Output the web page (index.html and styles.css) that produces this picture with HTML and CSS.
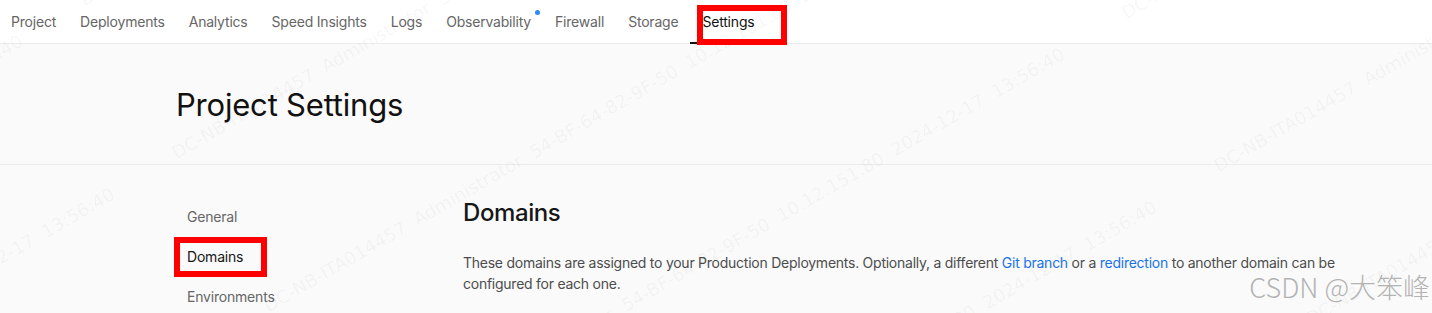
FILE: index.html
```html
<!DOCTYPE html>
<html lang="en">
<head>
    <meta charset="UTF-8">
    <meta name="viewport" content="width=device-width, initial-scale=1.0">
    <title>Project Settings - Domains</title>
    <link rel="stylesheet" href="styles.css">
</head>
<body>
    <nav class="tabs">
        <a class="tab" href="#">Project</a>
        <a class="tab" href="#">Deployments</a>
        <a class="tab" href="#">Analytics</a>
        <a class="tab" href="#">Speed Insights</a>
        <a class="tab" href="#">Logs</a>
        <a class="tab" href="#">Observability<span class="dot"></span></a>
        <a class="tab" href="#">Firewall</a>
        <a class="tab" href="#">Storage</a>
        <a class="tab active" href="#">Settings<span class="mark mark-tab"></span></a>
    </nav>

    <header class="page-head">
        <div class="wrap">
            <h1>Project Settings</h1>
        </div>
    </header>

    <section class="settings">
        <div class="wrap layout">
            <aside class="side">
                <a href="#">General</a>
                <a class="active" href="#">Domains<span class="mark mark-side"></span></a>
                <a href="#">Environments</a>
            </aside>
            <main class="main">
                <h2>Domains</h2>
                <p>These domains are assigned to your Production Deployments. Optionally, a different <a href="#">Git branch</a> or a <a href="#">redirection</a> to another domain can be configured for each one.</p>
            </main>
        </div>
    </section>

    <!-- 截图水印 -->
    <div class="watermark">
        <span class="wm wm-1">DC-NB-ITA014457  Administrator  54-BF-64-82-9F-50  10.12.151.80  2024-12-17  13:56:40</span>
        <span class="wm wm-2">DC-NB-ITA014457  Administrator  54-BF-64-82-9F-50  10.12.151.80  2024-12-17  13:56:40</span>
        <span class="wm wm-3">DC-NB-ITA014457  Administrator  54-BF-64-82-9F-50  10.12.151.80  2024-12-17  13:56:40</span>
        <span class="wm wm-4">DC-NB-ITA014457  Administrator  54-BF-64-82-9F-50  10.12.151.80  2024-12-17  13:56:40</span>
        <span class="wm wm-5">DC-NB-ITA014457  Administrator  54-BF-64-82-9F-50  10.12.151.80  2024-12-17  13:56:40</span>
        <span class="wm wm-6">DC-NB-ITA014457  Administrator  54-BF-64-82-9F-50  10.12.151.80  2024-12-17  13:56:40</span>
        <span class="wm wm-7">DC-NB-ITA014457  Administrator  54-BF-64-82-9F-50  10.12.151.80  2024-12-17  13:56:40</span>
        <span class="wm wm-8">DC-NB-ITA014457  Administrator  54-BF-64-82-9F-50  10.12.151.80  2024-12-17  13:56:40</span>
        <span class="wm wm-9">DC-NB-ITA014457  Administrator  54-BF-64-82-9F-50  10.12.151.80  2024-12-17  13:56:40</span>
        <span class="wm wm-10">DC-NB-ITA014457  Administrator  54-BF-64-82-9F-50  10.12.151.80  2024-12-17  13:56:40</span>
    </div>
    <div class="csdn">CSDN @大笨峰</div>
</body>
</html>
```

FILE: styles.css
```css
* {
    margin: 0;
    padding: 0;
    box-sizing: border-box;
}

body {
    font-family: Inter, 'Noto Sans', Arial, sans-serif;
    background: #fafafa;
    color: #171717;
    min-height: 100vh;
    overflow: hidden;
}

a {
    text-decoration: none;
    color: inherit;
}

/* 顶部标签栏 */
.tabs {
    display: flex;
    height: 44px;
    background: #fff;
    border-bottom: 1px solid #ebebeb;
}

.tab {
    position: relative;
    display: flex;
    align-items: center;
    padding: 0 12px;
    font-size: 14px;
    letter-spacing: -0.2px;
    color: #666;
}

.tab:first-child {
    padding-left: 11px;
}

.tab.active {
    color: #111;
}

.tab.active::after {
    content: '';
    position: absolute;
    left: 0;
    right: 0;
    bottom: -1px;
    height: 2px;
    background: #111;
}

.dot {
    position: absolute;
    top: 10px;
    right: 3px;
    width: 5px;
    height: 5px;
    border-radius: 50%;
    background: #2a8af6;
}

/* 红框标注 */
.mark {
    position: absolute;
    border: 6px solid #ff0000;
    z-index: 3;
}

.mark-tab {
    left: 7px;
    top: 5px;
    width: 90px;
    height: 40px;
}

.mark-side {
    left: -2px;
    top: 0;
    width: 93px;
    height: 40px;
}

.wrap {
    margin-left: 176px;
    margin-right: 60px;
}

.page-head {
    height: 121px;
    border-bottom: 1px solid #ebebeb;
}

.page-head .wrap {
    height: 100%;
    display: flex;
    align-items: center;
}

.page-head h1 {
    font-size: 31px;
    font-weight: 400;
    letter-spacing: -0.2px;
    color: #111;
}

.layout {
    display: grid;
    grid-template-columns: 287px 1fr;
    padding-top: 32px;
}

.side a {
    position: relative;
    display: block;
    height: 40px;
    line-height: 40px;
    padding: 0 11px;
    font-size: 14px;
    letter-spacing: -0.2px;
    color: #666;
}

.side a.active {
    color: #171717;
}

.main h2 {
    font-size: 24px;
    line-height: 32px;
    font-weight: 500;
    letter-spacing: -0.4px;
    color: #171717;
    margin-bottom: 23px;
}

.main p {
    max-width: 900px;
    font-size: 14px;
    line-height: 21px;
    letter-spacing: -0.25px;
    color: #4d4d4d;
}

.main p a {
    color: #1a73e8;
}

/* 水印 */
.watermark {
    position: absolute;
    inset: 0;
    overflow: hidden;
    pointer-events: none;
}

.wm {
    position: absolute;
    white-space: pre;
    font-family: 'DejaVu Sans', sans-serif;
    font-size: 18px;
    line-height: 18px;
    color: rgba(0, 0, 0, 0.045);
    transform-origin: 0 100%;
    transform: rotate(-30deg);
}

.wm-1 { left: 86px; top: -9px; }
.wm-2 { left: 178px; top: 144px; }
.wm-3 { left: 270px; top: 297px; }
.wm-4 { left: 362px; top: 450px; }
.wm-5 { left: 454px; top: 603px; }
.wm-6 { left: -588px; top: 590px; }
.wm-7 { left: -680px; top: 437px; }
.wm-8 { left: 1128px; top: 4px; }
.wm-9 { left: 1220px; top: 157px; }
.wm-10 { left: 1312px; top: 310px; }

.csdn {
    position: absolute;
    right: 2px;
    top: 270px;
    font-family: 'Noto Sans CJK SC', sans-serif;
    font-size: 27px;
    line-height: 34px;
    font-weight: 300;
    color: #b3b3b3;
    text-shadow: 0 0 1px #fff;
    pointer-events: none;
}
```
